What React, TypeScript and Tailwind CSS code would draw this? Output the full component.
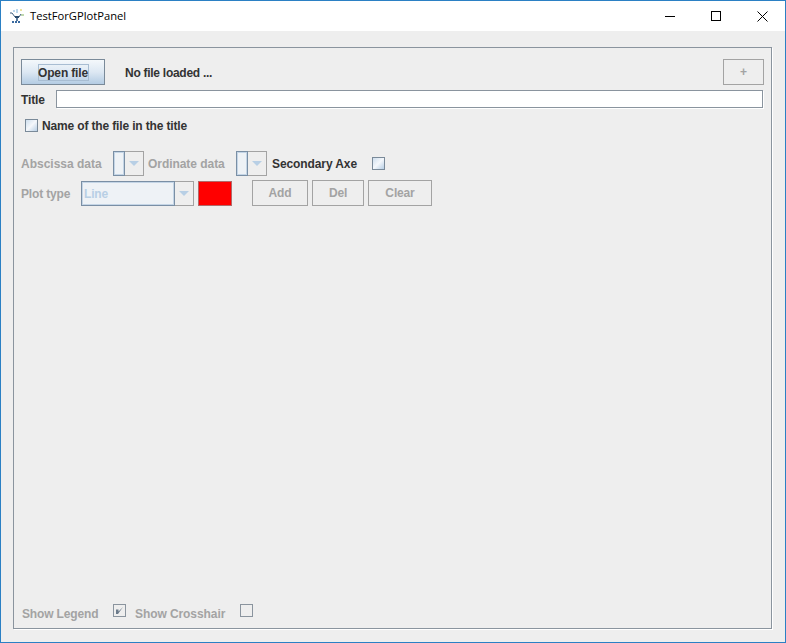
import React from "react";

function GradientCheck() {
  return (
    <span className="block w-[13px] h-[13px] border border-[#7a8a99] bg-gradient-to-br from-[#cfdfee] via-[#f4f7fb] to-[#b8cfe5]" />
  );
}

function DisabledBtn({ label, w }: { label: string; w: string }) {
  return (
    <div className={"h-[26px] flex items-center justify-center border border-[#a3a3a3] text-[#a3a3a3] " + w}>
      {label}
    </div>
  );
}

function Arrow() {
  return (
    <svg width="10" height="5" viewBox="0 0 10 5" className="block">
      <path d="M0 0H10L5 5Z" fill="#b8cfe5" />
    </svg>
  );
}

function SmallCombo() {
  return (
    <div className="flex w-[31px] h-[25px]">
      <div className="w-[12px] border border-[#7a8fa5] shadow-[inset_0_0_0_1px_#c4d5e6] bg-[#eef2f6]" />
      <div className="flex-1 flex items-center justify-center border border-l-0 border-[#a3a3a3]">
        <Arrow />
      </div>
    </div>
  );
}

export default function App() {
  return (
    <div className="w-[786px] h-[643px] flex flex-col bg-[#eeeeee] border border-[#2b80c4] font-['Liberation_Sans',Arial,sans-serif] text-[12px] font-bold tracking-[-0.15px] overflow-hidden">
      {/* title bar */}
      <div className="h-[30px] shrink-0 bg-white flex items-center font-normal text-black tracking-normal">
        <svg width="16" height="16" viewBox="0 0 16 16" className="ml-[8px]">
          <path d="M1 5H3L6 9H10L12 6" stroke="#3f5f7f" strokeWidth="1" fill="none" />
          <path d="M6 8H10V10H6Z" fill="#2a4a6a" />
          <path d="M7 10H9V13H7Z" fill="#5a7a9a" />
          <path d="M3 14H12" stroke="#3a6aa0" strokeWidth="2" strokeDasharray="2 1" />
          <path d="M5 2V4M8 1V5" stroke="#7ab0d8" strokeWidth="1" />
          <path d="M11 2H13" stroke="#d8c840" strokeWidth="1" />
          <path d="M12 7H15" stroke="#80b060" strokeWidth="1" />
        </svg>
        <span className="ml-[5px] font-['Open_Sans',sans-serif] text-[11.2px]">TestForGPlotPanel</span>
        <div className="ml-auto flex items-center">
          <div className="w-[46px] flex justify-center">
            <span className="block w-[10px] h-[1px] bg-black" />
          </div>
          <div className="w-[46px] flex justify-center">
            <span className="block w-[10px] h-[10px] border border-black" />
          </div>
          <div className="w-[46px] flex justify-center">
            <svg width="11" height="11" viewBox="0 0 11 11">
              <path d="M0.5 0.5L10.5 10.5M10.5 0.5L0.5 10.5" stroke="#000" strokeWidth="1" />
            </svg>
          </div>
        </div>
      </div>

      {/* panel */}
      <div className="flex-1 pl-[12px] pr-[13px] pt-[16px] pb-[13px] flex">
        <div className="flex-1 flex flex-col border border-[#8a949e] shadow-[1px_1px_0_#ffffff] pl-[7px] pr-[7px] pt-[11px] pb-[7px]">
          <div className="flex items-center h-[26px]">
            <div className="w-[84px] h-[26px] border border-[#7a8a99] bg-gradient-to-b from-[#f4f8fb] via-[#dde8f3] to-[#b4cce3] flex items-center justify-center">
              <span className="border border-[#a8bdd2] h-[17px] w-[51px] pt-[1px] flex items-center justify-center whitespace-nowrap text-[#333]">
                Open file
              </span>
            </div>
            <span className="ml-[20px] pt-[1px] tracking-[-0.27px] text-[#333]">No file loaded ...</span>
            <div className="ml-auto w-[41px] h-[26px] border border-[#a3a3a3] flex items-center justify-center text-[#a3a3a3]">
              +
            </div>
          </div>

          <div className="flex items-center mt-[5px] h-[18px]">
            <span className="w-[35px] pt-[1px] text-[#333]">Title</span>
            <div className="flex-1 mr-[1px] h-[18px] bg-white border border-[#8a949e] shadow-[1px_1px_0_#ffffff]" />
          </div>

          <div className="flex items-center mt-[11px] ml-[4px] h-[13px]">
            <GradientCheck />
            <span className="ml-[4px] text-[#333]">Name of the file in the title</span>
          </div>

          <div className="flex items-center mt-[19px] h-[25px] text-[#a3a3a3]">
            <span className="w-[92px] tracking-normal">Abscissa data</span>
            <SmallCombo />
            <span className="ml-[4px] w-[88px] tracking-[-0.05px]">Ordinate data</span>
            <SmallCombo />
            <span className="ml-[5px] w-[100px] tracking-[-0.1px] text-[#333]">Secondary Axe</span>
            <GradientCheck />
          </div>

          <div className="flex items-center mt-[4px] h-[26px] text-[#a3a3a3]">
            <span className="w-[60px] pt-[1px]">Plot type</span>
            <div className="flex w-[113px] h-[25px]">
              <div className="w-[94px] border border-[#7a8fa5] shadow-[inset_0_0_0_1px_#c4d5e6] bg-[#eef2f6] flex items-center pl-[2px] pt-[1px] text-[#b8cfe5]">
                Line
              </div>
              <div className="flex-1 flex items-center justify-center border border-l-0 border-[#a3a3a3]">
                <Arrow />
              </div>
            </div>
            <div className="ml-[4px] w-[34px] h-[25px] bg-[#ff0000] border border-[#b06a6a]" />
            <div className="ml-[20px] flex gap-[4px]">
              <DisabledBtn label="Add" w="w-[56px]" />
              <DisabledBtn label="Del" w="w-[52px]" />
              <DisabledBtn label="Clear" w="w-[64px]" />
            </div>
          </div>

          <div className="mt-auto flex items-start h-[17px] ml-[1px] text-[#a3a3a3]">
            <span className="w-[91px] pt-[1px]">Show Legend</span>
            <span className="block w-[13px] h-[13px] border border-[#8a949e]">
              <svg width="11" height="11" viewBox="0 0 11 11" className="block">
                <path d="M2 4.5H4.5V6.5L9 2L4 9H2Z" fill="#6a7a8a" />
              </svg>
            </span>
            <span className="ml-[9px] w-[105px] pt-[1px] tracking-[-0.08px]">Show Crosshair</span>
            <span className="block w-[13px] h-[13px] border border-[#8a949e]" />
          </div>
        </div>
      </div>
    </div>
  );
}
